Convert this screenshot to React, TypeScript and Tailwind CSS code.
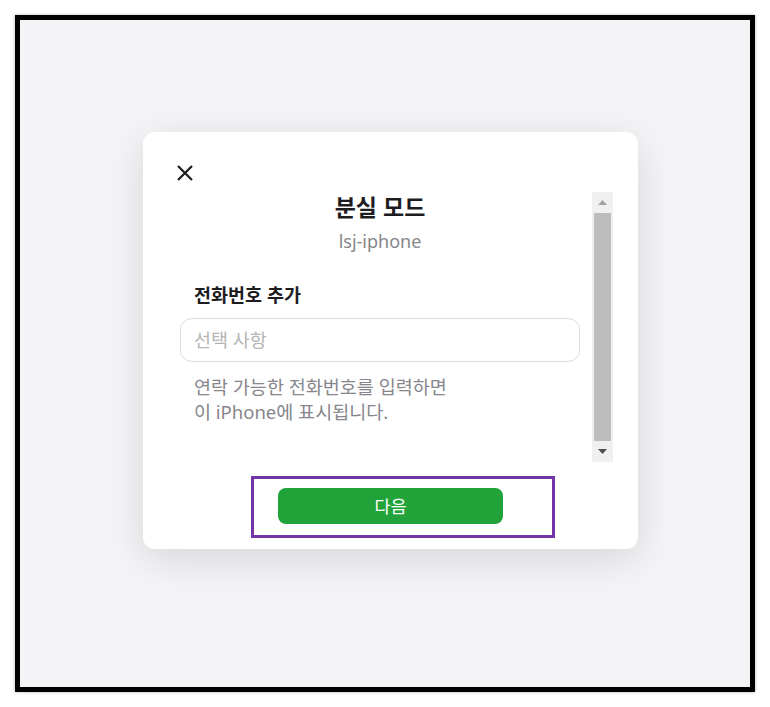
import React from "react";

const font = { fontFamily: '"Noto Sans", "Noto Sans CJK KR", sans-serif' };

function CloseIcon() {
  return (
    <svg width="18" height="18" viewBox="0 0 18 18" fill="none">
      <path d="M2 2 L16 16 M16 2 L2 16" stroke="#1f1f1f" strokeWidth="2.3" strokeLinecap="butt" />
    </svg>
  );
}

function Scrollbar() {
  return (
    <div className="flex w-[21px] flex-col bg-[#f0f0f0]">
      <div className="flex h-[21px] items-center justify-center">
        <svg width="9" height="5" viewBox="0 0 9 5">
          <path d="M0 5 L4.5 0 L9 5 Z" fill="#a3a3a3" />
        </svg>
      </div>
      <div className="flex-1 px-[2px]">
        <div className="h-full w-full bg-[#bdbdbd]" />
      </div>
      <div className="flex h-[21px] items-center justify-center">
        <svg width="9" height="5" viewBox="0 0 9 5">
          <path d="M0 0 L9 0 L4.5 5 Z" fill="#4f4f4f" />
        </svg>
      </div>
    </div>
  );
}

export default function App() {
  return (
    <div className="h-[707px] w-[770px] bg-white p-[15px]" style={font}>
      <div className="h-full w-full border-[5px] border-black bg-[#f4f4f6] pl-[123px] pt-[112px] shadow-[0_0_3px_rgba(0,0,0,0.3)]">
        <div className="relative flex h-[417px] w-[495px] flex-col rounded-[12px] bg-white shadow-[0_10px_40px_rgba(0,0,0,0.12)]">
          <div className="pl-[33px] pt-[32px]">
            <CloseIcon />
          </div>
          <div className="ml-[25px] mr-[25px] mt-[10px] flex h-[270px]">
            <div className="flex flex-1 flex-col">
              <div className="text-center text-[23px] font-bold leading-[30px] text-[#1d1d1f]">분실 모드</div>
              <div className="mt-[7px] text-center text-[18px] leading-[24px] text-[#86868b]">lsj-iphone</div>
              <div className="mt-[31px] pl-[26px] text-[18.5px] font-bold leading-[22px] text-[#1d1d1f]">전화번호 추가</div>
              <div className="mx-[12px] mt-[12px] flex h-[44px] items-center rounded-[12px] border border-[#dcdcdc] px-[13px] text-[18.5px] text-[#b5b5b5]">
                선택 사항
              </div>
              <div className="mt-[12px] pl-[26px] text-[18.5px] leading-[25px] text-[#86868b]">
                <div>연락 가능한 전화번호를 입력하면</div>
                <div>이 iPhone에 표시됩니다.</div>
              </div>
            </div>
            <Scrollbar />
          </div>
          <div className="mt-[26px] flex justify-center">
            <div className="flex h-[36px] w-[225px] items-center justify-center rounded-[8px] bg-[#21a339] text-[17.5px] text-white">
              다음
            </div>
          </div>
          <div className="absolute left-[108px] top-[344px] h-[62px] w-[304px] border-[3px] border-[#7436a6]" />
        </div>
      </div>
    </div>
  );
}
